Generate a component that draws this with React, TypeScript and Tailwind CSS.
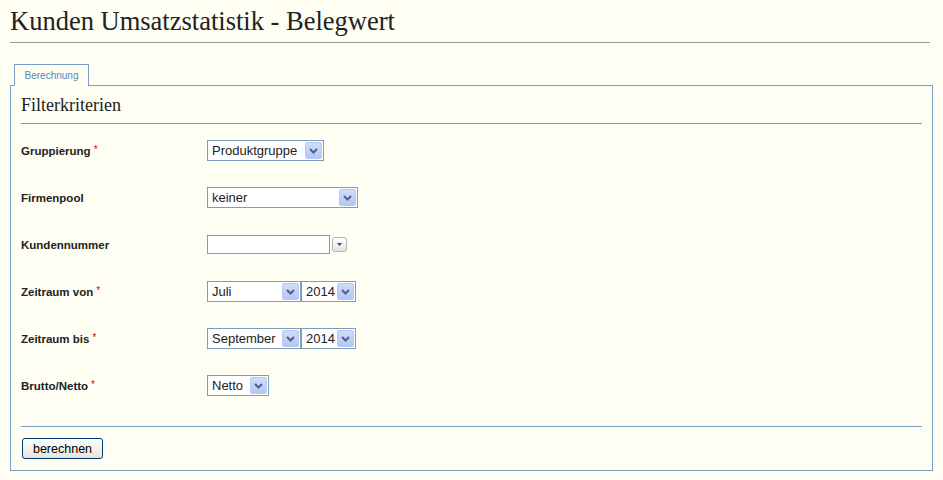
import React from "react";

function Arrow() {
  return (
    <span className="flex h-[17px] w-[17px] shrink-0 items-center justify-center rounded-[2px] border border-[#b7c9f2] bg-gradient-to-b from-[#cfdcfc] to-[#b3c7f5]">
      <svg width="9" height="6" viewBox="0 0 9 6">
        <path d="M1 1 L4.5 4.5 L8 1" fill="none" stroke="#4d6185" strokeWidth="2" />
      </svg>
    </span>
  );
}

function Select({ value, w }: { value: string; w: string }) {
  return (
    <div className={`flex h-[21px] items-center justify-between border border-[#7f9db9] bg-white pl-[4px] pr-[1px] ${w}`}>
      <span className="text-[13px] leading-none text-[#222]">{value}</span>
      <Arrow />
    </div>
  );
}

function Label({ text, req }: { text: string; req?: boolean }) {
  return (
    <div className="w-[186px] shrink-0 pt-[2px] text-[11.5px] font-bold text-[#222]">
      {text}
      {req && <sup className="relative -top-[2px] ml-[3px] text-[10px] font-normal text-[#e00000]">*</sup>}
    </div>
  );
}

export default function App() {
  return (
    <div className="h-[480px] w-full bg-[#fffef3] px-[10px] font-['Liberation_Sans',Arial,sans-serif]">
      {/* Page title */}
      <h1 className="w-[920px] border-b border-[#999] pb-[6px] pt-[6px] font-['Liberation_Serif',serif] text-[26.5px] leading-[30px] text-[#222]">
        Kunden Umsatzstatistik - Belegwert
      </h1>

      {/* Tabs */}
      <div className="mt-[21px] flex pl-[4px]">
        <div className="relative z-10 -mb-px flex h-[22px] w-[75px] items-center justify-center border border-b-0 border-[#7b9ec7] bg-[#fffef3] text-[10px] text-[#5585bd]">
          Berechnung
        </div>
      </div>

      {/* Panel */}
      <div className="w-[923px] border border-[#7b9ec7] px-[10px] pb-[11px]">
        <div className="border-b border-[#7b9ec7] pb-[8px] pt-[9px] font-['Liberation_Serif',serif] text-[18px] leading-[20px] text-[#222]">
          Filterkriterien
        </div>

        <div className="mt-[3px]">
          <div className="flex h-[47px] items-center">
            <Label text="Gruppierung" req />
            <Select value="Produktgruppe" w="w-[117px]" />
          </div>
          <div className="flex h-[47px] items-center">
            <Label text="Firmenpool" />
            <Select value="keiner" w="w-[151px]" />
          </div>
          <div className="flex h-[47px] items-center">
            <Label text="Kundennummer" />
            <div className="h-[19px] w-[123px] border border-[#7f9db9] bg-white" />
            <span className="ml-[2px] flex h-[15px] w-[15px] items-center justify-center rounded-[3px] border border-[#b5b5b5] bg-gradient-to-b from-white to-[#e4e4e4]">
              <svg width="5" height="3" viewBox="0 0 5 3">
                <path d="M0 0 H5 L2.5 3 Z" fill="#444" />
              </svg>
            </span>
          </div>
          <div className="flex h-[47px] items-center">
            <Label text="Zeitraum von" req />
            <Select value="Juli" w="w-[94px]" />
            <Select value="2014" w="w-[55px]" />
          </div>
          <div className="flex h-[47px] items-center">
            <Label text="Zeitraum bis" req />
            <Select value="September" w="w-[94px]" />
            <Select value="2014" w="w-[55px]" />
          </div>
          <div className="flex h-[47px] items-center">
            <Label text="Brutto/Netto" req />
            <Select value="Netto" w="w-[62px]" />
          </div>
        </div>

        <div className="mt-[17px] border-t border-[#7b9ec7] pt-[11px]">
          <button className="ml-px flex h-[21px] w-[81px] items-center justify-center rounded-[3px] border border-[#003c74] bg-gradient-to-b from-white to-[#e6e4da] pt-[2px] text-[12.5px] text-black">
            berechnen
          </button>
        </div>
      </div>
    </div>
  );
}
